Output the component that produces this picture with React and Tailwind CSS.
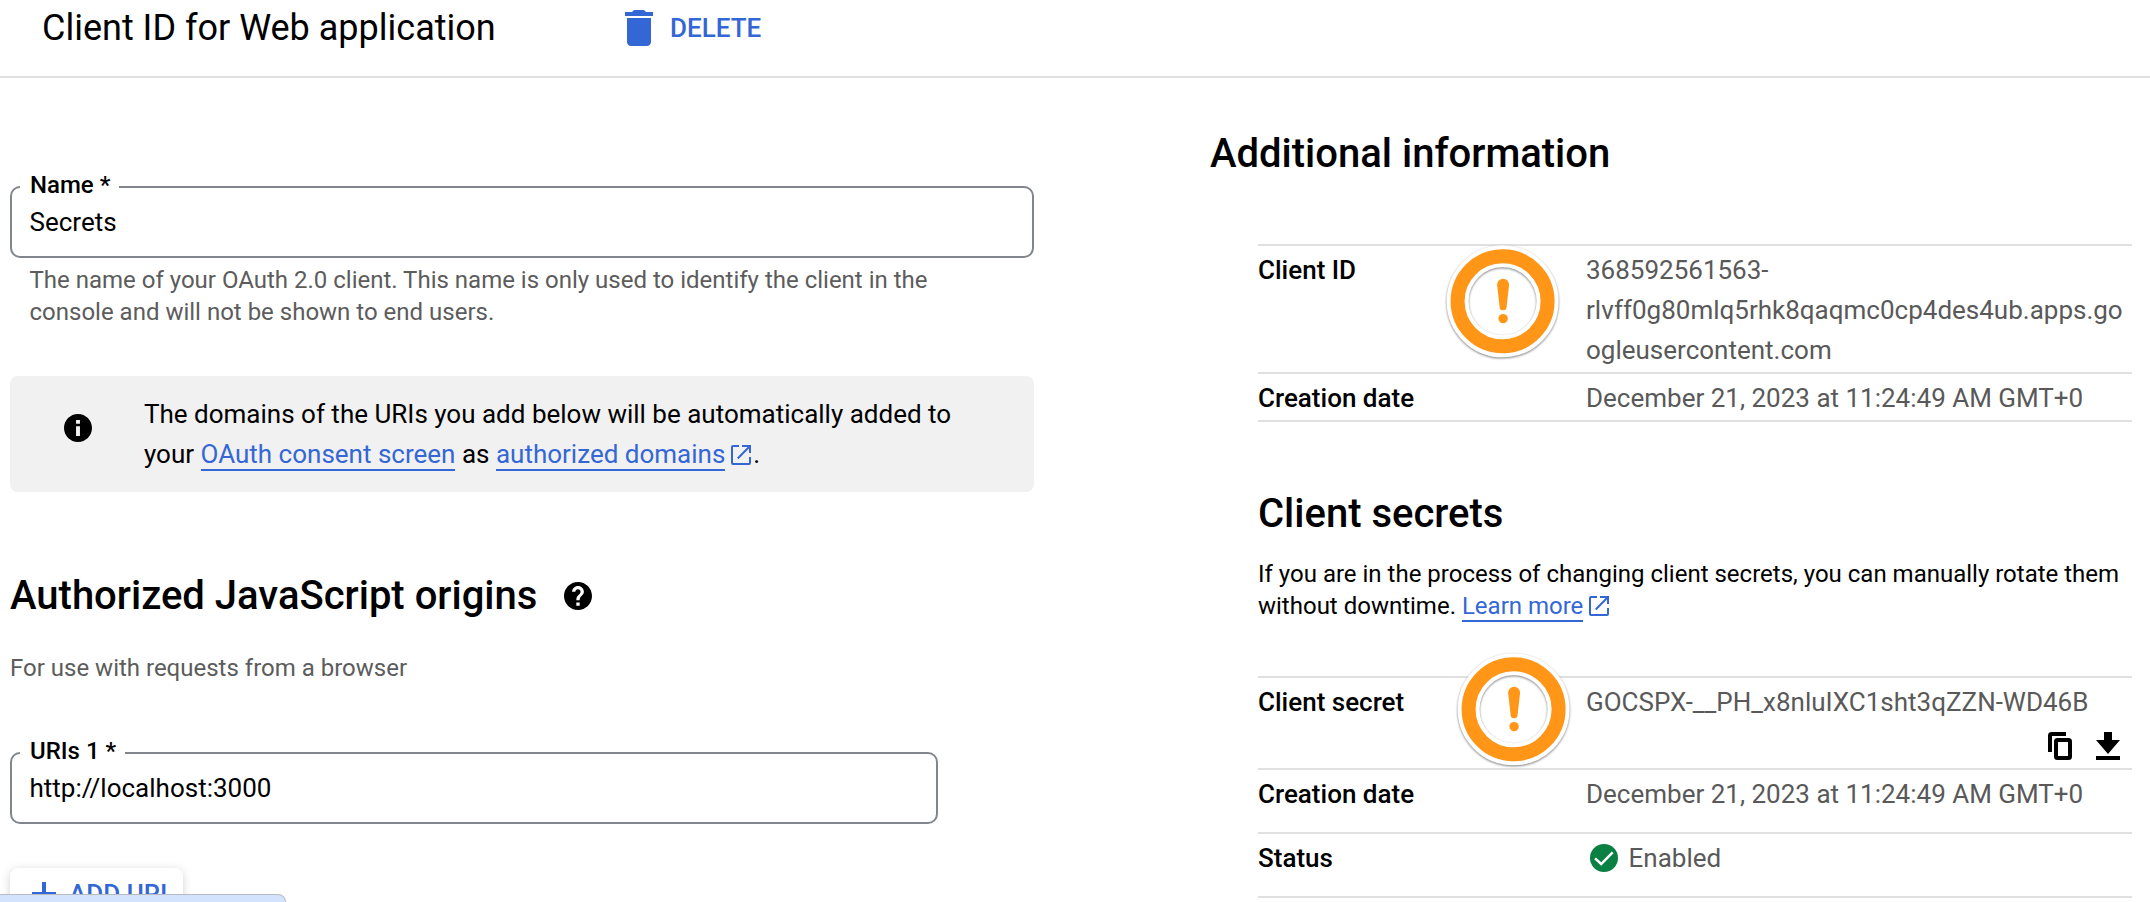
const DeleteIcon = () => (
  <svg viewBox="0 0 24 24" className="mt-1 h-12 w-12 fill-[#3367d6]">
    <path d="M6 19c0 1.1.9 2 2 2h8c1.1 0 2-.9 2-2V7H6v12zM19 4h-3.500l-1-1h-5l-1 1H5v2h14V4z" />
  </svg>
);

const InfoIcon = () => (
  <svg viewBox="2 2 20 20" className="h-7 w-7 shrink-0 fill-black">
    <path d="M12 2C6.480 2 2 6.480 2 12s4.480 10 10 10 10-4.480 10-10S17.520 2 12 2zm1.400 15.800h-2.800v-7h2.800v7zm0-8.800h-2.800V6.200h2.800V9z" />
  </svg>
);

const HelpIcon = () => (
  <svg viewBox="2 2 20 20" className="h-7 w-7 shrink-0 fill-black">
    <path d="M12 2C6.480 2 2 6.480 2 12s4.480 10 10 10 10-4.480 10-10S17.520 2 12 2zm1.200 17h-2.400v-2.300h2.400V19zm2-7.700l-.9.900c-.7.750-1.150 1.400-1.150 2.900h-2.300v-.6c0-1.100.450-2.100 1.170-2.830l1.240-1.260c.370-.360.590-.860.590-1.410 0-1.100-.750-1.850-1.850-1.850S10.100 7.900 10.100 9H7.800c0-2.300 1.900-4.200 4.200-4.200s4.200 1.900 4.200 4.200c0 .9-.4 1.700-1 2.300z" />
  </svg>
);

const ExternalIcon = ({ className }) => (
  <svg viewBox="0 0 20 20" className={`inline-block h-5 w-5 fill-[#3367d6] ${className}`}>
    <path d="M2 0h6v2H2v16h16v-6h2v6a2 2 0 0 1-2 2H2a2 2 0 0 1-2-2V2a2 2 0 0 1 2-2z" />
    <path d="M11 0h9v8h-2V3.600L7.400 14.200 6 12.800 16.600 2H11z" />
  </svg>
);

const CheckIcon = () => (
  <svg viewBox="2 2 20 20" className="h-7 w-7 shrink-0">
    <circle cx="12" cy="12" r="10" fill="#0b8043" />
    <path d="M5.600 12.300L10 16.300L18.200 8" fill="none" stroke="#fff" strokeWidth="1.800" />
  </svg>
);

const CopyIcon = () => (
  <svg viewBox="0 0 24 28" className="h-7 w-6">
    <path d="M2 20V3.500A1.500 1.500 0 0 1 3.500 2H18M9.500 8h11A1.500 1.500 0 0 1 22 9.500v15a1.500 1.500 0 0 1-1.500 1.500h-11A1.500 1.500 0 0 1 8 24.500v-15A1.500 1.500 0 0 1 9.500 8z" fill="none" stroke="#000" strokeWidth="4" />
  </svg>
);

const DownloadIcon = () => (
  <svg viewBox="0 0 24 28" className="h-7 w-6">
    <path d="M8 0h8v8h8L12 22 0 8h8zM0 24h24v4H0z" />
  </svg>
);

const WarningBadge = ({ className }) => (
  <svg viewBox="-60.600 -60.300 120 120" className={`absolute h-[120px] w-[120px] overflow-visible ${className}`}>
    <circle r="50" fill="#fff" />
    <g className="drop-shadow-[0_1.5px_1.2px_rgba(0,0,0,0.5)]">
      <circle r="45" fill="none" stroke="#fff" strokeWidth="22" />
    </g>
    <circle r="45" fill="none" stroke="#ff9618" strokeWidth="14" />
    <path d="M-5.500-16.500a6 6 0 0 1 12 0L4 5.500a3.500 3.500 0 0 1-7 0z" fill="#ff9618" />
    <circle cx="0.500" cy="17.300" r="4.700" fill="#ff9618" />
  </svg>
);

const Field = ({ label, value, className }) => (
  <fieldset className={`h-[85px] rounded-[10px] border-2 border-[#80868b] ${className}`}>
    <legend className="ml-2 pr-[9px] pb-1 pl-[10px] text-[24px] leading-6 font-medium">{label}</legend>
    <div className="mt-px ml-[17.500px] text-[26px] leading-10">{value}</div>
  </fieldset>
);

const Link = ({ children }) => <a className="border-b-2 border-[#3367d6] text-[#3367d6]">{children}</a>;

const Row = ({ label, children, className }) => (
  <div className={`relative flex border-b-2 border-[#e0e0e0] text-[26px] leading-10 ${className}`}>
    <div className="w-[328px] shrink-0 font-medium">{label}</div>
    <div className="min-w-0 flex-1 text-[#595959]">{children}</div>
  </div>
);

export default function App() {
  return (
    <div className="relative h-[902px] w-[2150px] overflow-hidden bg-white font-[Roboto,sans-serif] text-black">
      <header className="flex h-[78px] items-start border-b-2 border-[#e0e0e0] pl-[42px]">
        <h1 className="mt-2 w-[573px] text-[36px] leading-10">Client ID for Web application</h1>
        <DeleteIcon />
        <span className="mt-2 ml-[7px] text-[26px] leading-10 font-medium text-[#3367d6]">DELETE</span>
      </header>

      <main className="flex">
        <section className="ml-[10px] w-[1024px] pt-[95px]">
          <Field label="Name *" value="Secrets" className="w-[1024px]" />
          <p className="mt-[6px] ml-[19.500px] text-[24px] leading-8 text-[#5c5c5c]">
            The name of your OAuth 2.0 client. This name is only used to identify the client in the
            <br />
            console and will not be shown to end users.
          </p>

          <div className="mt-12 flex h-[116px] items-start rounded-lg bg-[#f1f1f1]">
            <div className="mt-[38px] ml-[54px]">
              <InfoIcon />
            </div>
            <p className="mt-[18px] ml-[52px] text-[26px] leading-10 whitespace-nowrap">
              The domains of the URIs you add below will be automatically added to
              <br />
              your <Link>OAuth consent screen</Link> as <Link>authorized domains</Link>
              <ExternalIcon className="mr-[2px] ml-[6px] align-[-2px]" />.
            </p>
          </div>

          <div className="mt-20 flex items-center">
            <h2 className="text-[40px] leading-[48px] font-medium">Authorized JavaScript origins</h2>
            <div className="ml-[27px]">
              <HelpIcon />
            </div>
          </div>
          <p className="mt-8 text-[24px] leading-8 text-[#5c5c5c]">For use with requests from a browser</p>

          <Field label="URIs 1 *" value="http://localhost:3000" className="mt-[55px] w-[928px]" />

          <button className="mt-11 flex h-[56px] w-[173px] items-start rounded-lg bg-white pl-[22px] shadow-[0_2px_10px_rgba(0,0,0,0.18)]">
            <svg viewBox="0 0 24 24" className="mt-[14px] h-6 w-6 fill-[#3367d6]">
              <path d="M10 0h4v10h10v4H14v10h-4V14H0v-4h10z" />
            </svg>
            <span className="mt-[6px] ml-[13px] text-[26px] leading-10 font-medium text-[#3367d6]">ADD URI</span>
          </button>
        </section>

        <section className="ml-[176px] w-[922px] pt-[52px]">
          <h2 className="text-[40px] leading-[48px] font-medium">Additional information</h2>
          <div className="ml-12 w-[874px]">
            <div className="mt-[66px] border-t-2 border-[#e0e0e0]">
              <Row label="Client ID" className="h-[128px] pt-1">
                368592561563-
                <br />
                rlvff0g80mlq5rhk8qaqmc0cp4des4ub.apps.go
                <br />
                ogleusercontent.com
                <WarningBadge className="top-[-5px] left-[184px]" />
              </Row>
              <Row label="Creation date" className="h-12 pt-1">
                December 21, 2023 at 11:24:49 AM GMT+0
              </Row>
            </div>

            <h2 className="mt-[68px] text-[40px] leading-[48px] font-medium">Client secrets</h2>
            <p className="mt-5 text-[24px] leading-8 whitespace-nowrap">
              If you are in the process of changing client secrets, you can manually rotate them
              <br />
              without downtime. <Link>Learn more</Link>
              <ExternalIcon className="ml-[6px] align-[-2px]" />
            </p>

            <div className="mt-[54px] border-t-2 border-[#e0e0e0]">
              <Row label="Client secret" className="h-[92px] pt-1">
                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
                <div className="mt-[10px] mr-3 flex justify-end gap-6">
                  <CopyIcon />
                  <DownloadIcon />
                </div>
                <WarningBadge className="top-[-29px] left-[195px]" />
              </Row>
              <Row label="Creation date" className="h-16 pt-1">
                December 21, 2023 at 11:24:49 AM GMT+0
              </Row>
              <Row label="Status" className="h-16 pt-1">
                <div className="flex items-center gap-[10.500px] pl-1">
                  <CheckIcon />
                  <span>Enabled</span>
                </div>
              </Row>
            </div>
          </div>
        </section>
      </main>

      <div className="absolute -bottom-px left-0 h-[9px] w-[286px] rounded-tr-[8px] border-t border-r border-[#b8bcc2] bg-[#d3e3fd]" />
    </div>
  );
}
